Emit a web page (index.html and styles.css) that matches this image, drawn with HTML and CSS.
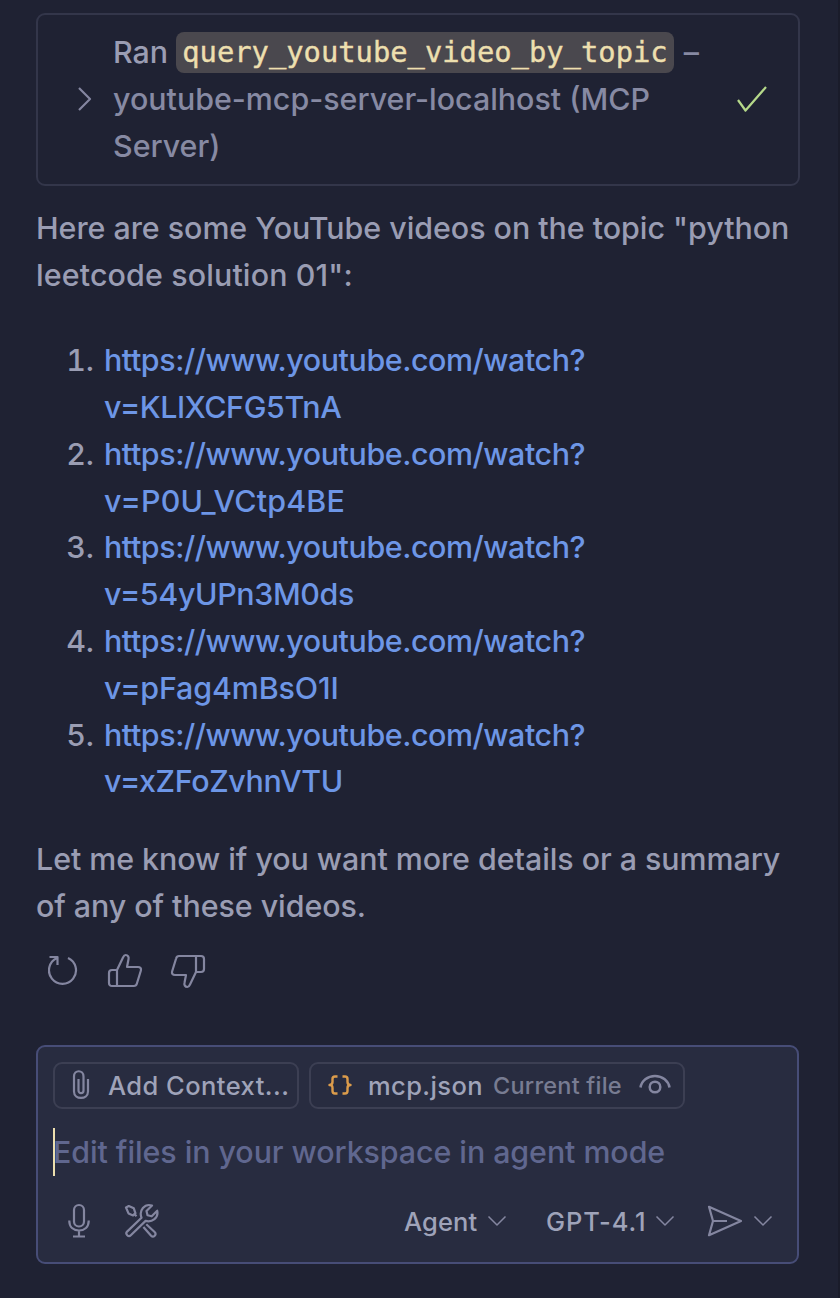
FILE: index.html
```html
<!DOCTYPE html>
<html lang="en">
<head>
<meta charset="utf-8">
<title>Chat</title>
<link rel="stylesheet" href="styles.css">
</head>
<body>
<main class="panel">
  <section class="tool-card">
    <svg class="tool-chevron" width="16" height="26" viewBox="0 0 16 26"><path d="M2 2l11 11L2 24"/></svg>
    <p class="tool-text"><span class="ran">Ran</span> <code>query_youtube_video_by_topic</code> –<br><span class="tool-server">youtube-mcp-server-localhost (MCP</span><br>Server)</p>
    <svg class="tool-check" width="32" height="28" viewBox="0 0 32 28"><path d="M2 15l7.500 10.500L30 2"/></svg>
  </section>

  <p class="text intro">Here are some YouTube videos on the topic "python<br><span class="l2">leetcode solution 01":</span></p>

  <ol class="videos">
    <li><span class="num">1.</span><a>https://www.youtube.com/watch?<br><span class="v1">v=KLlXCFG5TnA</span></a></li>
    <li><span class="num">2.</span><a>https://www.youtube.com/watch?<br><span class="v2">v=P0U_VCtp4BE</span></a></li>
    <li><span class="num">3.</span><a>https://www.youtube.com/watch?<br><span class="v3">v=54yUPn3M0ds</span></a></li>
    <li><span class="num">4.</span><a>https://www.youtube.com/watch?<br><span class="v4">v=pFag4mBsO1I</span></a></li>
    <li><span class="num">5.</span><a>https://www.youtube.com/watch?<br><span class="v5">v=xZFoZvhnVTU</span></a></li>
  </ol>

  <p class="text outro">Let me know if you want more details or a summary<br>of any of these videos.</p>

  <div class="feedback">
    <svg width="32" height="36" viewBox="0 0 32 36"><path d="M1.500 4h8v8M9 5A13.500 13.500 0 1 0 20 5" /></svg>
    <svg width="36" height="36" viewBox="0 0 36 36"><path d="M10 17l6-12.500c.6-1.300 1.300-2.500 2.600-2.500 2.500 0 3.400 2.200 2.900 4.200L20 14h11c2.300 0 3.500 1.500 2.900 3.500l-4 13c-.4 1.500-1.400 2.500-3 2.500H5c-1.800 0-3-1.200-3-3V20c0-1.800 1.200-3 3-3zM10 17v16"/></svg>
    <svg width="36" height="36" viewBox="0 0 36 36"><path d="M26 19l-6 12.500c-.6 1.300-1.300 2.500-2.600 2.500-2.500 0-3.400-2.200-2.900-4.200L16 22H5c-2.300 0-3.500-1.500-2.900-3.500l4-13C6.500 4 7.500 3 9 3h22c1.800 0 3 1.200 3 3v10c0 1.800-1.200 3-3 3zM26 19V3"/></svg>
  </div>

  <section class="composer">
    <div class="chips">
      <div class="chip chip-add">
        <svg width="18" height="32" viewBox="0 0 18 32"><path d="M16 10v12.500c0 8.500-14 8.500-14 0V7.500c0-7 9.500-7 9.500 0v14c0 3.500-5 3.500-5 0V10"/></svg>
        <span class="add-label">Add Context...</span>
      </div>
      <div class="chip chip-file">
        <svg class="json" width="24" height="20" viewBox="0 0 24 20"><path d="M9.500 1.500H7Q4.500 1.500 4.500 4v3Q4.500 10 1.500 10q3 0 3 3v3q0 2.500 2.500 2.500h2.500M14.500 1.500H17q2.500 0 2.500 2.500v3q0 3 3 3-3 0-3 3v3q0 2.500-2.500 2.500h-2.500"/></svg>
        <span class="file-label">mcp.json</span>
        <span class="file-note">Current file</span>
        <svg class="eye" width="32" height="22" viewBox="0 0 32 22"><path d="M1.500 14.500C2.500 8 8.500 3 16 3s13.500 5 14.500 11.500"/><circle cx="16" cy="14" r="5.300"/></svg>
      </div>
    </div>
    <div class="input"><span>Edit files in your workspace in agent mode</span></div>
    <div class="toolbar">
      <svg class="mic" width="22" height="36" viewBox="0 0 22 36"><rect x="6" y="2" width="10" height="21.500" rx="5"/><path d="M1.300 17.500v.5c0 6 4 9.500 9.700 9.500s9.700-3.500 9.700-9.500v-.5M11 27.500V33M5 33.500h12"/></svg>
      <svg class="tools" width="36" height="36" viewBox="0 0 36 36"><path d="M17.500 14.700L3.100 28.600c-2.300 2.400 1.400 6 3.700 3.700L21.600 17.900c6.500 1.800 13.200-3.200 11.600-10.200l-5.500 5.600-4.200-1-1-4.200L28 2.500c-7.500-2.300-13.300 5-10.500 12.200zM2 4.500L4.800 3l5 2.300 1.600 4.800-2.300 2.300-4.600-2zM10.800 11.500l1.700 1.700M22.300 21.300l8.300 7.700c2.500 2.500-1.100 6-3.500 3.700l-7.700-8.600"/></svg>
      <span class="agent">Agent</span>
      <svg class="down d1" width="20" height="12" viewBox="0 0 20 12"><path d="M1.500 1.500l8.500 8.500 8.500-8.500"/></svg>
      <span class="model">GPT-4.1</span>
      <svg class="down d2" width="20" height="12" viewBox="0 0 20 12"><path d="M1.500 1.500l8.500 8.500 8.500-8.500"/></svg>
      <svg class="send" width="36" height="32" viewBox="0 0 36 32"><path d="M2 1.800L34 16 2 30.200 6 16zM6 16h14"/></svg>
      <svg class="down d3" width="20" height="12" viewBox="0 0 20 12"><path d="M1.500 1.500l8.500 8.500 8.500-8.500"/></svg>
    </div>
  </section>
</main>
</body>
</html>
```
FILE: styles.css
```css
* { box-sizing: border-box; }
body { margin: 0; background: #1f2233; }
.panel {
  height: 1298px;
  padding: 13px 38px 0 36px;
  border-right: 2px solid #1a1c2a;
  font: 500 30.4px/46.8px Inter, "Liberation Sans", sans-serif;
  color: #9a9db3;
  overflow: hidden;
  white-space: nowrap;
}
p, ol { margin: 0; padding: 0; }
svg { display: block; flex: none; fill: none; stroke: #8486a0; stroke-width: 2.200; stroke-linejoin: round; }

.tool-card {
  display: flex;
  align-items: center;
  width: 764px;
  height: 173px;
  border: 2px solid #33364a;
  border-radius: 9px;
  padding: 0 30px 0 39px;
  color: #878aa3;
}
.tool-chevron, .tool-check { position: relative; top: -1px; }
.tool-text { width: 640px; margin-left: 20px; }
.ran { color: #9a9db3; }
.tool-check { margin-left: auto; stroke: #b5d98a; }
code {
  position: relative;
  top: -1px;
  margin-right: 2px;
  font: 28.800px/36px "DejaVu Sans Mono", monospace;
  -webkit-text-stroke: 0.400px #eddfae;
  background: #4a484e;
  color: #eddfae;
  border-radius: 8px;
  padding: 3px 6px 4px;
}

.intro { margin-top: 19px; letter-spacing: -0.030px; }
.l2 { letter-spacing: 0.130px; }
.videos { list-style: none; margin-top: 38.500px; }
.videos li { display: flex; height: 93.650px; }
.num { width: 58px; margin-right: 10px; text-align: right; font-variant-numeric: tabular-nums; }
.videos a { color: #6d96e6; letter-spacing: -0.430px; }
.videos .v1 { letter-spacing: -0.360px; }
.videos .v2 { letter-spacing: 0.200px; }
.videos .v3 { letter-spacing: -0.350px; }
.videos .v4 { letter-spacing: -0.120px; }
.videos .v5 { letter-spacing: -0.320px; }
.outro { margin-top: 30.800px; letter-spacing: -0.050px; }

.feedback { display: flex; align-items: center; gap: 27px; margin: 23px 0 0 12px; }

.composer {
  width: 763px;
  height: 219px;
  margin-top: 56px;
  border: 2px solid #474d77;
  border-radius: 9px;
  background: #282c40;
  padding: 15px;
}
.chips { display: flex; gap: 10px; }
.chip {
  display: flex;
  align-items: center;
  height: 47px;
  border: 2px solid #3c3f53;
  border-radius: 9px;
  font-size: 25.500px;
  color: #9fa3b9;
}
.chip-add { width: 246px; padding-left: 17px; gap: 18px; letter-spacing: 0.450px; }
.chip-file { width: 376px; padding-left: 17px; }
.add-label, .file-label, .file-note { padding-top: 2px; }
.json { stroke: #dc9c4b; stroke-width: 2.400; }
.file-label { margin-left: 16px; letter-spacing: 0.400px; }
.file-note { margin-left: 10px; font-size: 23.500px; letter-spacing: 0.220px; color: #787c92; }
.eye { margin: 0 0 2px 17px; stroke-width: 2.500; }
.input { margin-top: 19px; height: 48px; border-left: 2px solid #eddfae; color: #60678f; line-height: 49px; letter-spacing: -0.070px; }
.input span { margin-left: -2px; }
.toolbar { display: flex; align-items: center; margin-top: 27px; height: 36px; padding-left: 15px; font-size: 25.500px; color: #9fa3b9; }
.agent, .model { padding-top: 3px; }
.tools { margin-left: 34px; }
.agent { width: 73px; margin-left: 244px; letter-spacing: 0.150px; }
.down { stroke-width: 1.500; }
.d1 { margin-left: 10px; }
.model { width: 101px; margin-left: 39px; letter-spacing: 0.900px; }
.d2 { margin-left: 8px; }
.send { margin-left: 32px; }
.d3 { margin-left: 10px; }
```
